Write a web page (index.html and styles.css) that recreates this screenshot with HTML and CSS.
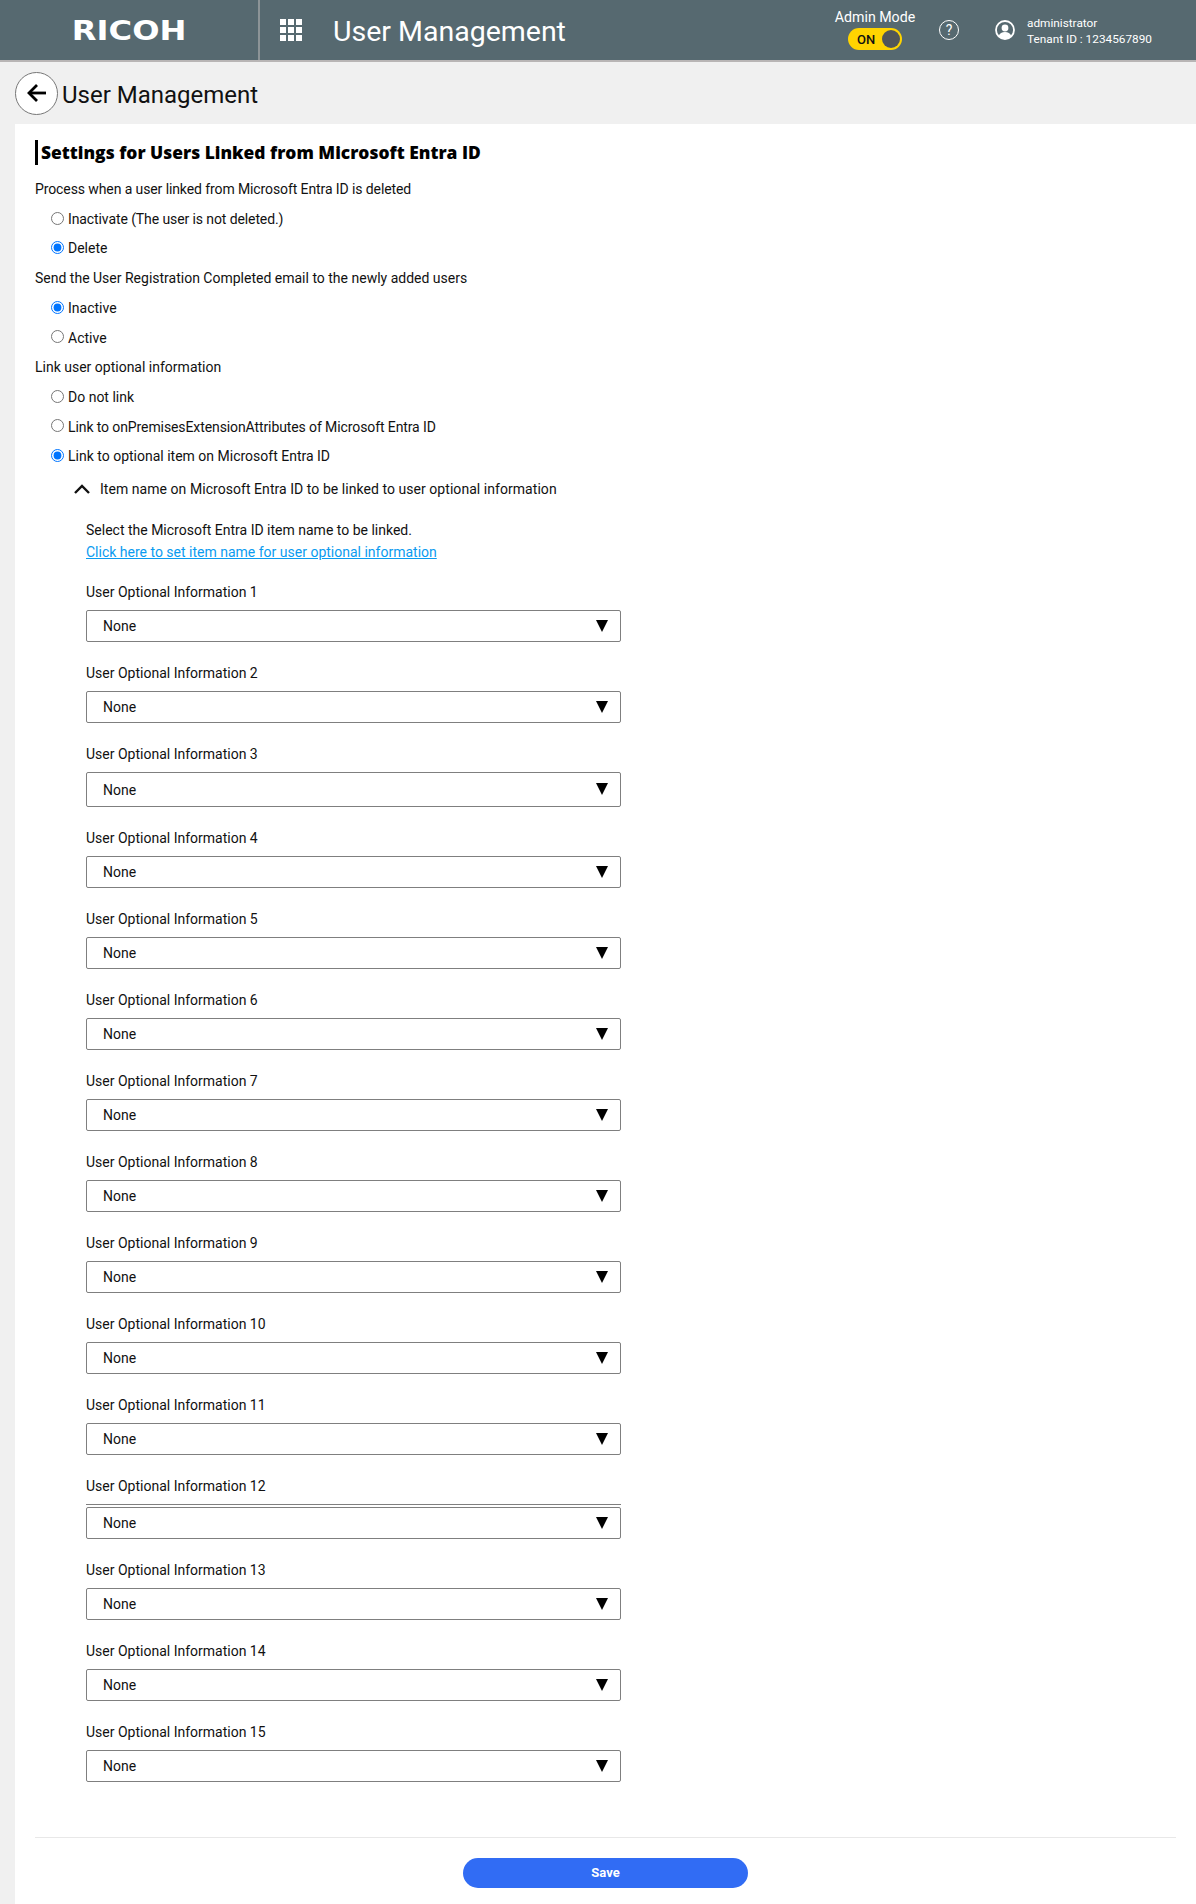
FILE: index.html
```html
<!DOCTYPE html>
<html lang="en">
<head>
    <meta charset="UTF-8">
    <meta name="viewport" content="width=device-width, initial-scale=1.0">
    <title>User Management</title>
    <link rel="stylesheet" href="styles.css">
</head>
<body>
    <header class="topbar">
        <div class="brand"><span class="logo">RICOH</span></div>
        <svg class="apps" width="22" height="22" viewBox="0 0 22 22" fill="#fff">
            <rect x="0" y="0" width="6" height="6"/><rect x="8" y="0" width="6" height="6"/><rect x="16" y="0" width="6" height="6"/>
            <rect x="0" y="8" width="6" height="6"/><rect x="8" y="8" width="6" height="6"/><rect x="16" y="8" width="6" height="6"/>
            <rect x="0" y="16" width="6" height="6"/><rect x="8" y="16" width="6" height="6"/><rect x="16" y="16" width="6" height="6"/>
        </svg>
        <div class="app-title">User Management</div>
        <div class="admin-mode">
            <div class="admin-label">Admin Mode</div>
            <div class="toggle"><span class="toggle-text">ON</span><span class="toggle-knob"></span></div>
        </div>
        <div class="help">?</div>
        <svg class="user-icon" width="20" height="20" viewBox="0 0 20 20">
            <circle cx="10" cy="10" r="9" fill="none" stroke="#fff" stroke-width="1.8"/>
            <circle cx="10" cy="8" r="3.4" fill="#fff"/>
            <path d="M3.6 16.2c1-3 3.4-4.2 6.4-4.2s5.4 1.200 6.400 4.200a9 9 0 0 1-12.800 0z" fill="#fff"/>
        </svg>
        <div class="user-info">
            <div>administrator</div>
            <div>Tenant ID : 1234567890</div>
        </div>
    </header>

    <div class="subbar">
        <div class="back">
            <svg width="20" height="20" viewBox="0 0 20 20" fill="none" stroke="#000" stroke-width="2.800">
                <path d="M19 10H2"/>
                <path d="M10 2l-8 8 8 8"/>
            </svg>
        </div>
        <div class="page-title">User Management</div>
    </div>

    <main class="content">
        <h2 class="section-title">Settings for Users Linked from Microsoft Entra ID</h2>

        <div class="para tight">Process when a user linked from Microsoft Entra ID is deleted</div>
        <label class="radio tight"><input type="radio" name="deleted">Inactivate (The user is not deleted.)</label>
        <label class="radio"><input type="radio" name="deleted" checked>Delete</label>

        <div class="para">Send the User Registration Completed email to the newly added users</div>
        <label class="radio"><input type="radio" name="mail" checked>Inactive</label>
        <label class="radio"><input type="radio" name="mail">Active</label>

        <div class="para">Link user optional information</div>
        <label class="radio"><input type="radio" name="link">Do not link</label>
        <label class="radio tight"><input type="radio" name="link">Link to onPremisesExtensionAttributes of Microsoft Entra ID</label>
        <label class="radio"><input type="radio" name="link" checked>Link to optional item on Microsoft Entra ID</label>

        <div class="accordion">
            <svg width="16" height="10" viewBox="0 0 16 10" fill="none" stroke="#111" stroke-width="2.400">
                <path d="M1 9l7-7 7 7"/>
            </svg>
            <span>Item name on Microsoft Entra ID to be linked to user optional information</span>
        </div>

        <div class="options">
            <div class="hint">Select the Microsoft Entra ID item name to be linked.</div>
            <a class="hint-link" href="#">Click here to set item name for user optional information</a>

            <div class="field"><div class="field-label">User Optional Information 1</div><div class="select">None<i class="arrow"></i></div></div>
            <div class="field"><div class="field-label">User Optional Information 2</div><div class="select">None<i class="arrow"></i></div></div>
            <div class="field"><div class="field-label">User Optional Information 3</div><div class="select tall">None<i class="arrow"></i></div></div>
            <div class="field"><div class="field-label">User Optional Information 4</div><div class="select">None<i class="arrow"></i></div></div>
            <div class="field"><div class="field-label">User Optional Information 5</div><div class="select">None<i class="arrow"></i></div></div>
            <div class="field"><div class="field-label">User Optional Information 6</div><div class="select">None<i class="arrow"></i></div></div>
            <div class="field"><div class="field-label">User Optional Information 7</div><div class="select">None<i class="arrow"></i></div></div>
            <div class="field"><div class="field-label">User Optional Information 8</div><div class="select">None<i class="arrow"></i></div></div>
            <div class="field"><div class="field-label">User Optional Information 9</div><div class="select">None<i class="arrow"></i></div></div>
            <div class="field"><div class="field-label">User Optional Information 10</div><div class="select">None<i class="arrow"></i></div></div>
            <div class="field"><div class="field-label">User Optional Information 11</div><div class="select">None<i class="arrow"></i></div></div>
            <div class="field"><div class="field-label">User Optional Information 12</div><div class="select-rule"></div><div class="select">None<i class="arrow"></i></div></div>
            <div class="field"><div class="field-label">User Optional Information 13</div><div class="select">None<i class="arrow"></i></div></div>
            <div class="field"><div class="field-label">User Optional Information 14</div><div class="select">None<i class="arrow"></i></div></div>
            <div class="field"><div class="field-label">User Optional Information 15</div><div class="select">None<i class="arrow"></i></div></div>
        </div>

        <div class="footer">
            <button class="save">Save</button>
        </div>
    </main>
</body>
</html>
```

FILE: styles.css
```css
* {
    box-sizing: border-box;
}
html, body {
    height: 100%;
}
body {
    margin: 0;
    display: flex;
    flex-direction: column;
    height: 1904px;
    overflow: hidden;
    background-color: #f0f0f0;
    color: #111;
    font-family: Roboto, "Open Sans", sans-serif;
    font-size: 14px;
}

/* top bar */
.topbar {
    display: flex;
    align-items: center;
    height: 62px;
    flex-shrink: 0;
    background-color: #566970;
    border-bottom: 2px solid #b8b5b5;
    color: #fff;
}
.brand {
    display: flex;
    justify-content: center;
    align-items: center;
    width: 260px;
    height: 60px;
    border-right: 2px solid #8c9497;
}
.logo {
    font-family: "DejaVu Sans", sans-serif;
    font-weight: 700;
    font-size: 27px;
    line-height: 1;
    transform: scaleX(1.19);
}
.apps {
    margin-left: 20px;
}
.app-title {
    margin-left: 31px;
    margin-top: 4px;
    font-size: 28.5px;
    line-height: 1;
}
.admin-mode {
    display: flex;
    flex-direction: column;
    align-items: center;
    margin-left: auto;
    width: 84px;
}
.admin-label {
    font-size: 14.2px;
    line-height: 18px;
    margin-top: -2px;
}
.toggle {
    display: flex;
    align-items: center;
    justify-content: space-between;
    width: 54px;
    height: 22px;
    margin-top: 2px;
    padding: 0 2px 0 9px;
    border-radius: 11px;
    background-color: #ffd400;
    color: #111;
    font-size: 13px;
    font-weight: 500;
}
.toggle-knob {
    width: 18px;
    height: 18px;
    border-radius: 50%;
    background-color: #50555a;
}
.help {
    display: flex;
    justify-content: center;
    align-items: center;
    width: 20px;
    height: 20px;
    margin-left: 22px;
    border: 1.5px solid #fff;
    border-radius: 50%;
    font-size: 14px;
}
.user-icon {
    margin-left: 36px;
}
.user-info {
    width: 128px;
    margin-left: 12px;
    margin-right: 41px;
    padding-top: 1px;
    font-size: 11.8px;
    line-height: 16px;
    white-space: nowrap;
}

/* page title */
.subbar {
    display: flex;
    align-items: center;
    height: 62px;
    flex-shrink: 0;
    padding-left: 15px;
}
.back {
    display: flex;
    justify-content: center;
    align-items: center;
    width: 43px;
    height: 43px;
    background-color: #fff;
    border: 1px solid #777;
    border-radius: 50%;
}
.page-title {
    margin-left: 4px;
    padding-top: 3px;
    font-size: 24px;
    color: #111;
}

/* content */
.content {
    flex: 1;
    margin-left: 15px;
    padding: 16px 20px 0;
    background-color: #fff;
}
.section-title {
    margin: 0 0 9px;
    height: 25px;
    padding-left: 3px;
    border-left: 3px solid #000;
    color: #000;
    font-family: "Open Sans", sans-serif;
    font-size: 17.4px;
    font-weight: 800;
    line-height: 25px;
}
.para {
    height: 30.4px;
    line-height: 30px;
}
.radio {
    display: flex;
    align-items: center;
    height: 29.4px;
    padding-left: 16px;
}
.radio input {
    width: 13px;
    height: 13px;
    margin: 0 4px 2px 0;
}
.tight {
    letter-spacing: -0.1px;
}
.accordion {
    display: flex;
    align-items: center;
    height: 36px;
    padding-left: 39px;
    letter-spacing: 0.05px;
}
.accordion span {
    margin-left: 10px;
}
.options {
    padding-left: 51px;
    margin-top: 13px;
}
.hint {
    line-height: 21px;
}
.hint-link {
    display: block;
    margin-bottom: 17px;
    line-height: 22px;
    color: #0a9bf0;
}
.field {
    margin-bottom: 19px;
    width: 535px;
}
.field-label {
    height: 24px;
    margin-bottom: 6px;
    line-height: 24px;
}
.select {
    display: flex;
    align-items: center;
    justify-content: space-between;
    height: 32px;
    padding: 1px 12px 0 16px;
    border: 1px solid #7f7f7f;
    border-radius: 2px;
    background-color: #fff;
}
.select.tall {
    height: 35px;
}
.select-rule {
    height: 3px;
    border-top: 1px solid #7f7f7f;
}
.arrow {
    width: 0;
    height: 0;
    margin-top: -1px;
    border-left: 6px solid transparent;
    border-right: 6px solid transparent;
    border-top: 12px solid #000;
}
.footer {
    display: flex;
    justify-content: center;
    margin-top: 55px;
    padding-top: 20px;
    border-top: 1px solid #e8e8e8;
}
.save {
    width: 285px;
    height: 30px;
    border: none;
    border-radius: 15px;
    background-color: #316cf4;
    color: #fff;
    font-family: inherit;
    font-size: 13px;
    font-weight: 700;
}
```
